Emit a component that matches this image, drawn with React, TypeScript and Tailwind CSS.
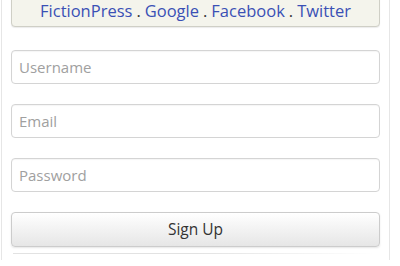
import React from "react";

export default function App() {
  const font = { fontFamily: '"Open Sans", "Noto Sans", sans-serif' };
  return (
    <div className="w-[400px] h-[266px] bg-white overflow-hidden" style={font}>
      <div className="ml-px w-[389px] h-[266px] border-x border-[#e6e6e6] pl-[9px] pr-[9px]">
        <div className="-mt-[6px] h-[33px] rounded-[4px] border border-[#cfcfc6] bg-[#f4f4ec] shadow-[0_1px_1px_rgba(0,0,0,0.08)] flex items-end justify-center pb-[5px] text-[16.5px] leading-[20px] text-[#3a50b5]">
          <span>FictionPress</span>
          <span className="text-[#333] mx-[4px]">.</span>
          <span>Google</span>
          <span className="text-[#333] mx-[4px]">.</span>
          <span>Facebook</span>
          <span className="text-[#333] mx-[4px]">.</span>
          <span>Twitter</span>
        </div>
        <div className="mt-[23px] flex flex-col gap-[20px]">
          {["Username", "Email", "Password"].map((p) => (
            <input
              key={p}
              placeholder={p}
              type={p === "Password" ? "password" : "text"}
              className="h-[34px] w-full rounded-[4px] border border-[#d4d4d4] bg-white px-[7px] text-[15px] text-[#333] placeholder:text-[#a0a0a0] outline-none shadow-[inset_0_1px_1px_rgba(0,0,0,0.04)]"
              style={font}
            />
          ))}
          <button
            className="h-[35px] w-full rounded-[4px] border border-[#cccccc] bg-gradient-to-b from-white to-[#e6e6e6] text-[15.5px] text-[#333] shadow-[0_1px_2px_rgba(0,0,0,0.1)]"
            style={font}
          >
            Sign Up
          </button>
        </div>
        <div className="mt-[6px] h-px w-[362px] ml-[2px] bg-gradient-to-r from-[#e2e2e2] via-[#e2e2e2] to-transparent" />
      </div>
    </div>
  );
}
